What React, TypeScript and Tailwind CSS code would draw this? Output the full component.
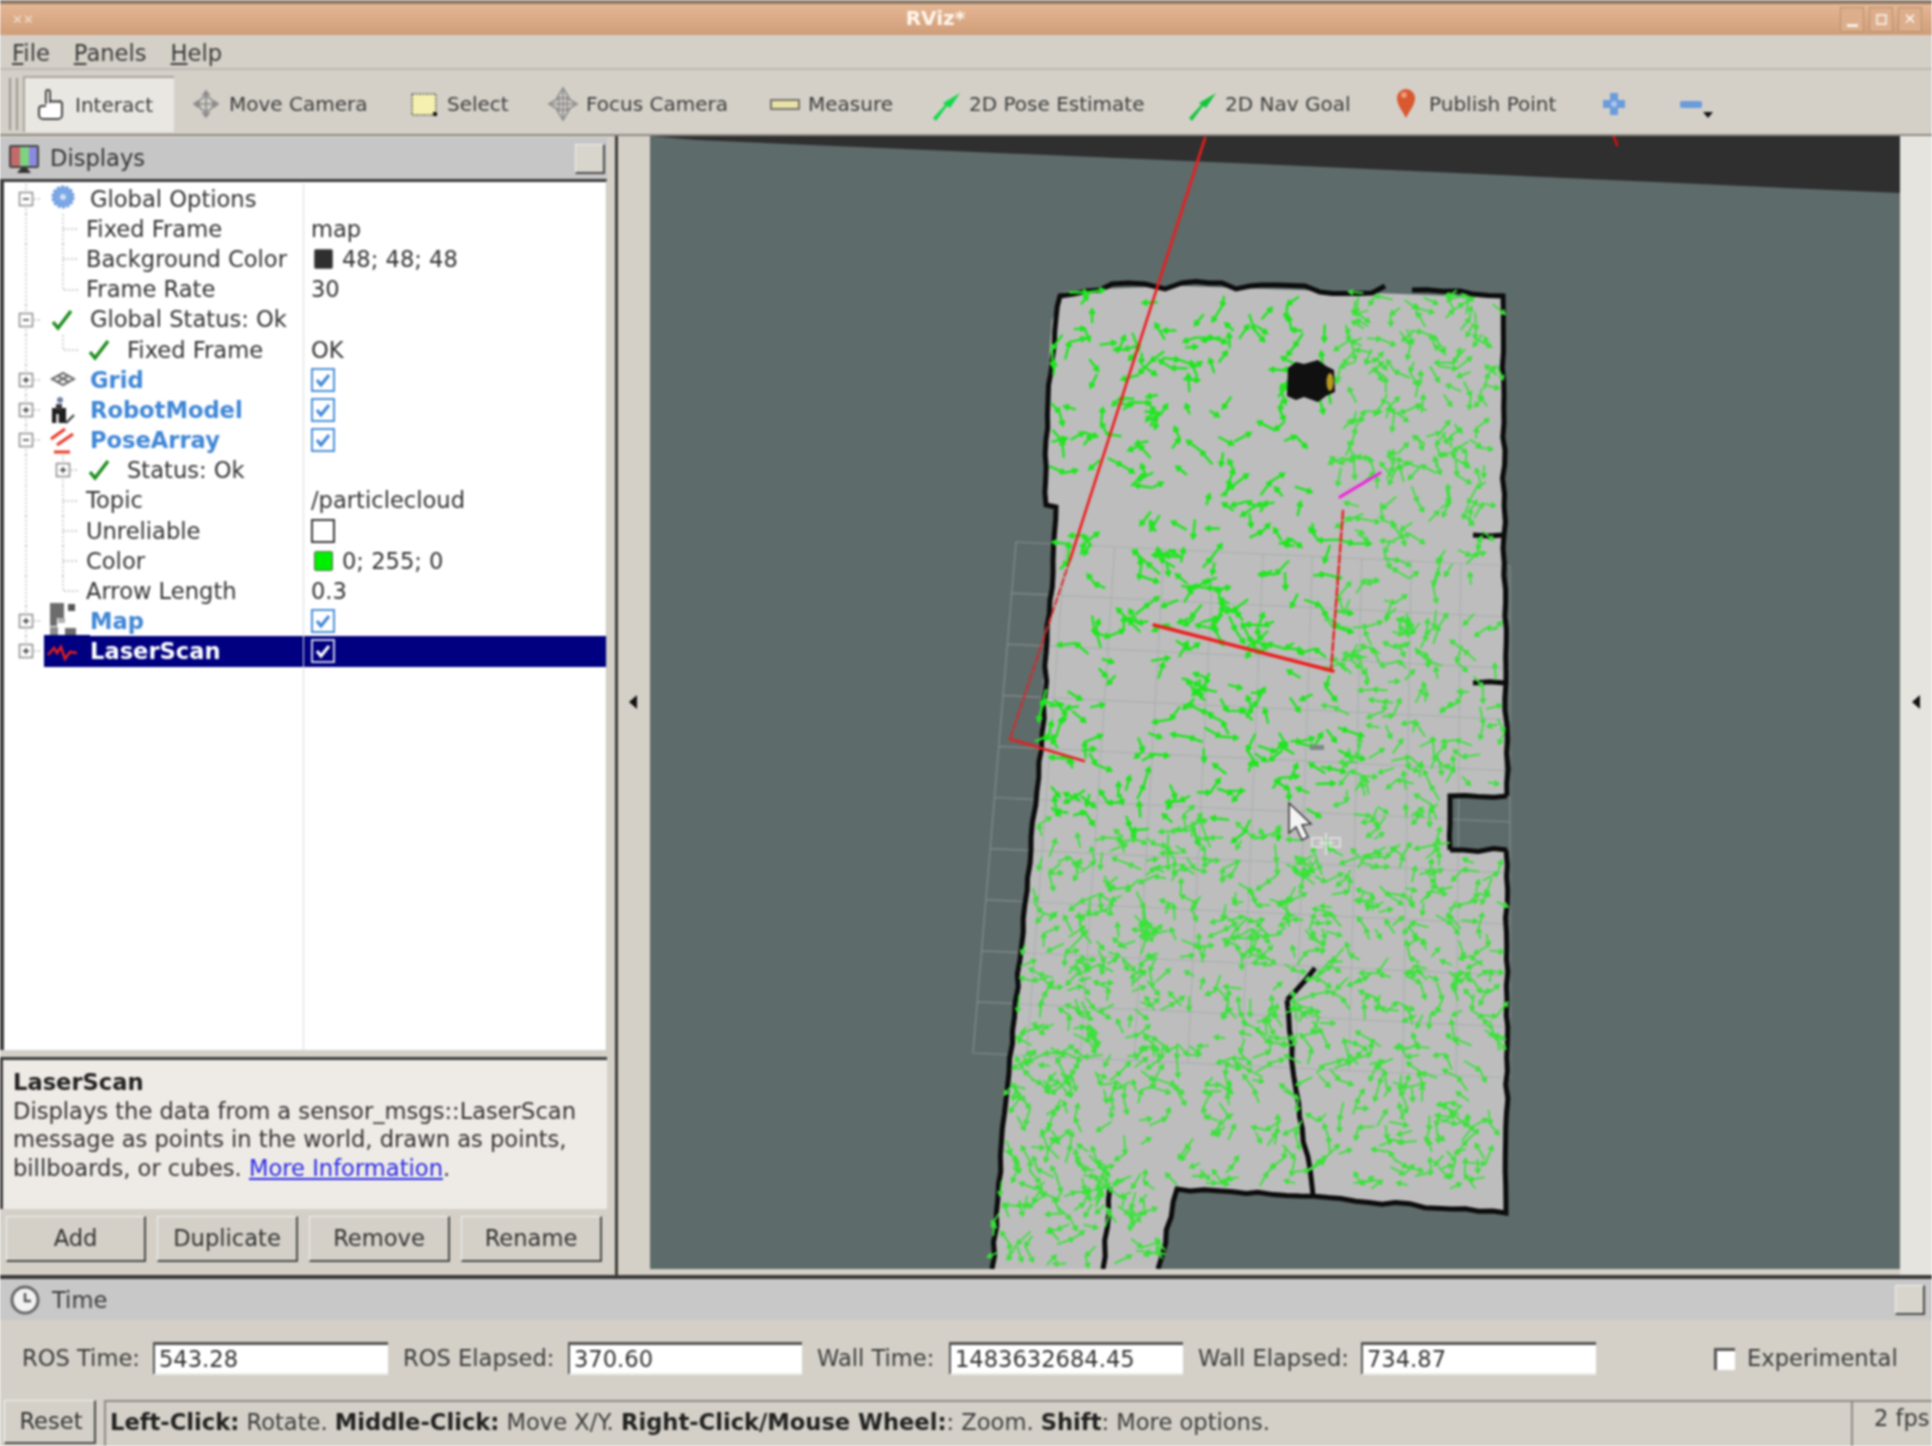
import React from "react";

// seeded random so the particle cloud is the same every load
function makeRandom(seed: number) {
    let s = seed;
    return () => {
        s = (s * 1664525 + 1013904223) % 4294967296;
        return s / 4294967296;
    };
}

function leftEdge(y: number) {
    if (y < 850) return 1056 - ((y - 300) / 550) * 25;
    return 1031 - ((y - 850) / 419) * 42;
}

function inMap(x: number, y: number) {
    if (y < 288 || y > 1269) return false;
    if (x < leftEdge(y) - 3 || x > 1508) return false;
    if (y > 1185 && x > 1160) return false;
    if (x > 1445 && y > 790 && y < 855) return false;
    return true;
}

// particles sit in little pairs in the picture, not evenly scattered
function buildParticles() {
    const rnd = makeRandom(4242);
    let dense = "";
    let sparse = "";
    for (let i = 0; i < 5200; i++) {
        let y = 288 + rnd() * 981;
        let x = leftEdge(y) - 2 + rnd() * (1502 - leftEdge(y));
        const heavy = x > 1340 || y > 830;
        if (rnd() > (heavy ? 0.3 : 0.15)) continue;
        const chain = 1 + Math.floor(rnd() * 2);
        let a = rnd() * Math.PI * 2;
        for (let c = 0; c < chain; c++) {
            const len = 10 + rnd() * 9;
            const ex = x + Math.cos(a) * len;
            const ey = y + Math.sin(a) * len;
            if (!inMap(ex, ey)) break;
            const hx1 = ex + Math.cos(a + 2.6) * 5;
            const hy1 = ey + Math.sin(a + 2.6) * 5;
            const hx2 = ex + Math.cos(a - 2.6) * 5;
            const hy2 = ey + Math.sin(a - 2.6) * 5;
            const seg = `M${x.toFixed(1)} ${y.toFixed(1)}L${ex.toFixed(1)} ${ey.toFixed(1)}M${hx1.toFixed(1)} ${hy1.toFixed(1)}L${ex.toFixed(1)} ${ey.toFixed(1)}L${hx2.toFixed(1)} ${hy2.toFixed(1)}`;
            if (heavy) sparse += seg;
            else dense += seg;
            x = ex;
            y = ey;
            a += (rnd() - 0.5) * 2.6;
        }
    }
    return { dense, sparse };
}

const particles = buildParticles();

function buildGrid() {
    const lines: string[] = [];
    const tl = [1016, 542];
    const tr = [1510, 566];
    const bl = [973, 1053];
    const br = [1510, 1078];
    for (let i = 0; i <= 10; i++) {
        const t = i / 10;
        lines.push(`M${tl[0] + (bl[0] - tl[0]) * t} ${tl[1] + (bl[1] - tl[1]) * t}L${tr[0] + (br[0] - tr[0]) * t} ${tr[1] + (br[1] - tr[1]) * t}`);
        lines.push(`M${tl[0] + (tr[0] - tl[0]) * t} ${tl[1] + (tr[1] - tl[1]) * t}L${bl[0] + (br[0] - bl[0]) * t} ${bl[1] + (br[1] - bl[1]) * t}`);
    }
    return lines.join("");
}

// walls in the occupancy map have stepped edges, so wobble the polylines a bit
const wallRnd = makeRandom(77);
function rough(points: number[][]) {
    let d = "";
    points.forEach((p, i) => {
        if (i === 0) {
            d += `M${p[0]} ${p[1]}`;
            return;
        }
        const prev = points[i - 1];
        const dist = Math.hypot(p[0] - prev[0], p[1] - prev[1]);
        const steps = Math.max(1, Math.round(dist / 14));
        for (let k = 1; k <= steps; k++) {
            const t = k / steps;
            const jx = k === steps ? 0 : (wallRnd() - 0.5) * 3;
            const jy = k === steps ? 0 : (wallRnd() - 0.5) * 3;
            d += `L${(prev[0] + (p[0] - prev[0]) * t + jx).toFixed(1)} ${(prev[1] + (p[1] - prev[1]) * t + jy).toFixed(1)}`;
        }
    });
    return d;
}

const wallPath = [
    [[1056, 318], [1060, 296], [1100, 290], [1112, 284], [1145, 284], [1165, 289], [1182, 283], [1222, 283], [1236, 289], [1262, 285], [1305, 286], [1320, 292], [1372, 293], [1385, 286]],
    [[1412, 290], [1460, 291], [1472, 294], [1503, 296], [1504, 535], [1506, 683], [1507, 796]],
    [[1056, 318], [1052, 360], [1048, 400], [1046, 440], [1046, 505], [1056, 507], [1050, 600], [1042, 733], [1031, 850], [1020, 960], [1006, 1100], [992, 1269]],
    [[1506, 850], [1507, 1000], [1506, 1213], [1300, 1196], [1177, 1189], [1158, 1269]],
    [[1473, 535], [1503, 535]],
    [[1473, 683], [1505, 683]],
    [[1450, 850], [1450, 796], [1507, 796]],
    [[1450, 850], [1507, 850]],
    [[1287, 1000], [1315, 968]],
    [[1287, 1000], [1296, 1090], [1313, 1195]],
    [[1110, 1187], [1103, 1269]],
]
    .map(rough)
    .join("");

function MapView() {
    // coordinates are page pixels, the view box starts where the panel starts
    return (
        <svg viewBox="650 136 1250 1133" className="block w-full h-full">
            <rect x="650" y="136" width="1250" height="1133" fill="#5d6b6a" />
            <polygon points="650,136 1900,136 1900,193 1700,184 1280,165 697,140" fill="#2f2f2f" />
            <polygon
                points="1064,292 1100,289 1180,286 1300,290 1503,298 1506,1212 1177,1189 1158,1269 991,1269 1031,850 1056,507 1046,507 1046,400 1052,320"
                fill="#bdbdbd"
            />
            <rect x="1450" y="795" width="57" height="55" fill="#5d6b6a" />
            <path d={buildGrid()} stroke="#a0a6a6" strokeWidth="1.2" fill="none" opacity="0.6" />
            <path d={wallPath} stroke="#0c0c0c" strokeWidth="5" fill="none" />
            <path d={particles.dense} stroke="#1ee61e" strokeWidth="2.4" fill="none" />
            <path d={particles.sparse} stroke="#39e239" strokeWidth="1.8" fill="none" />
            <polygon points="1288,368 1296,362 1304,364 1318,360 1326,366 1334,370 1335,392 1326,396 1318,402 1304,397 1296,400 1287,396" fill="#101010" />
            <ellipse cx="1330" cy="382" rx="3.5" ry="9" fill="#b89a1e" />
            <rect x="1310" y="745" width="14" height="5" fill="#7d8886" />
            <g fill="none" strokeLinecap="round">
                <line x1="1205" y1="138" x2="1070" y2="560" stroke="#ee1c1c" strokeWidth="2.6" />
                <line x1="1070" y1="560" x2="1010" y2="739" stroke="#d82828" strokeWidth="2" strokeDasharray="7 3" />
                <line x1="1010" y1="739" x2="1084" y2="761" stroke="#e62020" strokeWidth="2.6" />
                <line x1="1154" y1="625" x2="1333" y2="671" stroke="#ee1c1c" strokeWidth="3.4" />
                <line x1="1343" y1="511" x2="1331" y2="671" stroke="#e62020" strokeWidth="2.4" strokeDasharray="8 3" />
                <line x1="1614" y1="137" x2="1617" y2="145" stroke="#d01010" strokeWidth="2.6" />
                <line x1="1340" y1="497" x2="1380" y2="473" stroke="#ee22dd" strokeWidth="3.2" />
            </g>
            <path d="M1289 803v30l7-6 6 13 6-3-6-12 9-1z" fill="#f4f4f4" stroke="#3a3a3a" strokeWidth="1.6" />
            <g fill="none" stroke="#e8e8e8" strokeWidth="1.5">
                <rect x="1312" y="838" width="10" height="9" />
                <rect x="1330" y="838" width="10" height="9" />
                <path d="M1326 833v22M1318 843h16" />
            </g>
        </svg>
    );
}

function Expander({ x, open }: { x: number; open: boolean }) {
    return (
        <g>
            <rect x={x - 6.5} y="8.5" width="13" height="13" fill="#fff" stroke="#8b8b8b" strokeWidth="1.5" />
            <path d={open ? `M${x - 3} 15h6` : `M${x - 3} 15h6M${x} 12v6`} stroke="#333" strokeWidth="1.4" />
        </g>
    );
}

function Check({ cx }: { cx: number }) {
    return <path d={`M${cx - 10} 17l5 6 13-17`} fill="none" stroke="#1c8c1c" strokeWidth="3.4" />;
}

function RowIcon({ name, cx }: { name: string; cx: number }) {
    if (name === "check") return <Check cx={cx} />;
    if (name === "gear")
        return (
            <g>
                <circle cx={cx} cy="13" r="10" fill="#7ca8e4" stroke="#6c9ce0" strokeWidth="3" strokeDasharray="3 1.5" />
                <circle cx={cx} cy="13" r="3" fill="#cfe0f7" />
            </g>
        );
    if (name === "grid")
        return (
            <g fill="none" stroke="#6e6e6e" strokeWidth="2">
                <path d={`M${cx - 11} 14l11-6 11 6-11 6z`} />
                <path d={`M${cx - 5} 11l11 6M${cx + 5} 11l-11 6`} />
            </g>
        );
    if (name === "robot")
        return (
            <g>
                <circle cx={cx - 3} cy="5" r="3" fill="#6f7da8" />
                <rect x={cx - 11} y="13" width="14" height="15" fill="#1e1e1e" />
                <rect x={cx - 7} y="9" width="6" height="6" fill="#3a3a3a" />
                <rect x={cx - 7} y="19" width="3" height="9" fill="#cfcfcf" />
                <path d={`M${cx + 3} 28l8-8`} stroke="#333" strokeWidth="2" />
            </g>
        );
    if (name === "pose")
        return (
            <g fill="none" stroke="#ea3a2a" strokeWidth="3">
                <path d={`M${cx - 12} 14l14-10`} />
                <path d={`M${cx - 6} 20l16-11`} />
                <path d={`M${cx - 9} 27h16`} />
            </g>
        );
    if (name === "map")
        return (
            <g fill="#6c6c6c">
                <rect x={cx - 13} y="-3" width="14" height="15" />
                <rect x={cx + 5} y="-2" width="7" height="7" fill="#555" />
                <rect x={cx - 13} y="12" width="7" height="8" />
                <rect x={cx - 5} y="12" width="7" height="5" fill="#b0b0b0" />
                <rect x={cx - 13} y="21" width="8" height="9" fill="#8c8c8c" />
                <rect x={cx + 2} y="22" width="11" height="8" />
            </g>
        );
    return <path d={`M${cx - 15} 19l6-7 3 5 4-6 4 12 5-7 7 1`} fill="none" stroke="#d71f1f" strokeWidth="2.6" />;
}

type TreeRow = {
    kind: "top" | "leaf" | "status";
    label: string;
    icon?: string;
    open?: boolean;
    bold?: boolean;
    value?: string;
    check?: boolean;
    swatch?: string;
    selected?: boolean;
    last?: boolean;
    inner?: boolean;
    expander?: boolean;
};

const rows: TreeRow[] = [
    { kind: "top", label: "Global Options", icon: "gear", open: true },
    { kind: "leaf", label: "Fixed Frame", value: "map", inner: true },
    { kind: "leaf", label: "Background Color", value: "48; 48; 48", swatch: "#2f2f2f", inner: true },
    { kind: "leaf", label: "Frame Rate", value: "30", last: true },
    { kind: "top", label: "Global Status: Ok", icon: "check", open: true },
    { kind: "status", label: "Fixed Frame", value: "OK", last: true },
    { kind: "top", label: "Grid", icon: "grid", bold: true, check: true },
    { kind: "top", label: "RobotModel", icon: "robot", bold: true, check: true },
    { kind: "top", label: "PoseArray", icon: "pose", bold: true, check: true, open: true },
    { kind: "status", label: "Status: Ok", expander: true, inner: true },
    { kind: "leaf", label: "Topic", value: "/particlecloud", inner: true },
    { kind: "leaf", label: "Unreliable", check: false, inner: true, value: "box" },
    { kind: "leaf", label: "Color", value: "0; 255; 0", swatch: "#00ee00", inner: true },
    { kind: "leaf", label: "Arrow Length", value: "0.3", last: true },
    { kind: "top", label: "Map", icon: "map", bold: true, check: true },
    { kind: "top", label: "LaserScan", icon: "laser", bold: true, check: true, selected: true },
];

function Guide({ row, index }: { row: TreeRow; index: number }) {
    const w = row.kind === "top" ? 86 : row.kind === "leaf" ? 82 : 123;
    return (
        <svg width={w} height="30" viewBox={`0 0 ${w} 30`} className="shrink-0 overflow-visible">
            {row.selected && <rect x="40" y="-1" width={w - 40} height="32" fill="#000080" />}
            <path
                d={index === rows.length - 1 ? "M22 0v15" : "M22 0v30"}
                stroke="#bdbdbd"
                strokeWidth="1.3"
                strokeDasharray="2 2"
                fill="none"
            />
            {row.kind === "top" && <path d="M22 15h14" stroke="#bdbdbd" strokeWidth="1.3" strokeDasharray="2 2" fill="none" />}
            {row.kind !== "top" && (
                <path
                    d={row.last ? "M59 0v15h16" : "M59 0v30M59 15h16"}
                    stroke="#bdbdbd"
                    strokeWidth="1.3"
                    strokeDasharray="2 2"
                    fill="none"
                />
            )}
            {row.kind === "top" && <Expander x={22} open={!!row.open} />}
            {row.expander && <Expander x={59} open={false} />}
            {row.kind === "top" && row.icon && <RowIcon name={row.icon} cx={59} />}
            {row.kind === "status" && <Check cx={96} />}
        </svg>
    );
}

function Checkbox({ checked, selected }: { checked: boolean; selected?: boolean }) {
    const border = selected ? "#c8c8e8" : checked ? "#4a90d9" : "#3a3a3a";
    return (
        <svg width="24" height="24" viewBox="0 0 24 24" className="shrink-0">
            <rect x="1" y="1" width="22" height="22" fill={selected ? "#000080" : "#fff"} stroke={border} strokeWidth="2" />
            {checked && (
                <path d="M6 12l4 5 8-10" fill="none" stroke={selected ? "#fff" : "#3f86d8"} strokeWidth="3" />
            )}
        </svg>
    );
}

function TreeLine({ row, index }: { row: TreeRow; index: number }) {
    const textColor = row.selected ? "text-white" : row.bold ? "text-[#3f86d6]" : "text-[#333333]";
    return (
        <div className="flex h-[30.17px] items-center">
            <div className="flex h-full w-[300px] shrink-0 items-center border-r border-[#dcdcdc]">
                <Guide row={row} index={index} />
                <div className={`flex h-full flex-1 items-center overflow-visible whitespace-nowrap ${row.selected ? "bg-[#000080]" : ""}`}>
                    <span className={`${textColor} ${row.bold ? "font-bold" : ""}`}>{row.label}</span>
                </div>
            </div>
            <div className={`flex h-full flex-1 items-center gap-[9px] pl-[7px] text-[#333333] ${row.selected ? "bg-[#000080]" : ""}`}>
                {row.check !== undefined || row.value === "box" ? (
                    <Checkbox checked={!!row.check} selected={row.selected} />
                ) : (
                    <>
                        {row.swatch && (
                            <span
                                className={`ml-[3px] h-[20px] w-[19px] rounded-[2px] border border-[#666] ${row.swatch === "#00ee00" ? "bg-[#00ee00]" : "bg-[#2f2f2f]"}`}
                            />
                        )}
                        <span>{row.value}</span>
                    </>
                )}
            </div>
        </div>
    );
}

function QtButton({ children, className }: { children: React.ReactNode; className: string }) {
    return (
        <button className={`flex items-center justify-center border-t border-l border-[#f2f0ec] border-r-2 border-b-2 border-r-[#4a4a48] border-b-[#4a4a48] bg-[#d4d0c8] text-[#333333] ${className}`}>
            {children}
        </button>
    );
}

function DockButton() {
    return <div className="h-[30px] w-[30px] border-t border-l border-[#f2f0ec] border-r-2 border-b-2 border-r-[#4a4a48] border-b-[#4a4a48] bg-[#d8d5cd]" />;
}

function Field({ value, className }: { value: string; className: string }) {
    return (
        <div className={`flex h-[33px] items-center border-t-[3px] border-l-2 border-[#555555] border-b-2 border-b-[#eeece8] bg-white pl-[4px] text-[#333333] ${className}`}>
            {value}
        </div>
    );
}

function ToolItem({ label, width, icon }: { label?: string; width: string; icon: React.ReactNode }) {
    return (
        <div className={`flex shrink-0 items-center gap-[7px] ${width}`}>
            <svg width="32" height="40" viewBox="0 0 32 40" className="shrink-0">
                {icon}
            </svg>
            {label && <span className="whitespace-nowrap text-[#3c3c3c]">{label}</span>}
        </div>
    );
}

export default function App() {
    return (
        <div className="flex h-[1446px] w-[1932px] flex-col overflow-hidden bg-[#d4d0c8] font-['DejaVu_Sans',sans-serif] text-[22.6px] leading-none blur-[1px]">
            {/* title bar */}
            <div className="flex h-[35px] shrink-0 items-center justify-between border-t-[4px] border-[#8c7a68] bg-gradient-to-b from-[#e6b795] to-[#cf9d78] pl-[12px] pr-[10px]">
                <span className="text-[13px] text-[#efe0d0]">✕✕</span>
                <span className="mr-[3px] mb-[3px] font-bold text-[20px] text-[#fff6ec]">RViz*</span>
                <div className="flex gap-[5px]">
                    <div className="flex h-[25px] w-[24px] items-end justify-center border border-[#b8906e] bg-[#dcae8c] pb-[4px]">
                        <div className="h-[3px] w-[11px] bg-[#f8efe6]" />
                    </div>
                    <div className="flex h-[25px] w-[24px] items-center justify-center border border-[#b8906e] bg-[#dcae8c]">
                        <div className="h-[11px] w-[11px] border-2 border-[#f3e6da]" />
                    </div>
                    <div className="flex h-[25px] w-[24px] items-center justify-center border border-[#b8906e] bg-[#dcae8c] text-[15px] font-bold text-[#fffaf5]">✕</div>
                </div>
            </div>

            {/* menu */}
            <div className="flex h-[35px] shrink-0 items-center gap-[24px] border-b-2 border-[#bdb9b1] pl-[12px] pt-[4px] text-[#3a3a3a]">
                <span><span className="underline">F</span>ile</span>
                <span><span className="underline">P</span>anels</span>
                <span><span className="underline">H</span>elp</span>
            </div>

            {/* toolbar */}
            <div className="flex h-[66px] shrink-0 items-center border-b-2 border-[#8e8b84] pt-[3px] text-[20px]">
                <div className="ml-[9px] mr-[5px] h-[52px] w-[9px] shrink-0 border-x-2 border-[#9b9890]" />
                <div className="flex w-[167px] shrink-0">
                    <div className="flex h-[56px] w-[151px] items-center gap-[9px] border-t-2 border-l-2 border-[#aaa69e] bg-[#e9e7e2] pl-[11px]">
                        <svg width="30" height="36" viewBox="0 0 30 36" className="shrink-0">
                            <path d="M10 17V5a2 2 0 0 1 4 0v10l2-1 2 1 2-1 2 1 2-1 2 2v12a4 4 0 0 1-4 4H7a4 4 0 0 1-4-4v-6a3 3 0 0 1 3-3h4" fill="#fff" stroke="#444" strokeWidth="2" />
                        </svg>
                        <span className="text-[#3c3c3c]">Interact</span>
                    </div>
                </div>
                <ToolItem
                    label="Move Camera"
                    width="w-[218px]"
                    icon={
                        <g fill="none" stroke="#8a8a8a" strokeWidth="1.6">
                            <circle cx="16" cy="20" r="7" />
                            <path d="M16 7v26M4 20h24M16 7l-3 4h6zM16 33l-3-4h6zM4 20l4-3v6zM28 20l-4-3v6z" />
                        </g>
                    }
                />
                <ToolItem
                    label="Select"
                    width="w-[139px]"
                    icon={
                        <g>
                            <rect x="4" y="10" width="24" height="21" fill="#f5efb0" stroke="#555" strokeWidth="1.4" strokeDasharray="2 1.5" />
                            <rect x="25" y="28" width="4" height="4" fill="#111" />
                        </g>
                    }
                />
                <ToolItem
                    label="Focus Camera"
                    width="w-[222px]"
                    icon={
                        <g fill="none" stroke="#8d8d8d" strokeWidth="1.6">
                            <path d="M16 4l6 10h-12zM16 36l6-10h-12zM2 20l10-6v12zM30 20l-10-6v12z" />
                            <path d="M16 4v32M2 20h28" />
                        </g>
                    }
                />
                <ToolItem
                    label="Measure"
                    width="w-[161px]"
                    icon={<rect x="2" y="16" width="28" height="9" fill="#e9e1a8" stroke="#77756b" strokeWidth="2" />}
                />
                <ToolItem
                    label="2D Pose Estimate"
                    width="w-[256px]"
                    icon={<path d="M3 34L15 21l-2-2L30 9 20 24l-3-2L6 37z" fill="#12d94a" />}
                />
                <ToolItem
                    label="2D Nav Goal"
                    width="w-[204px]"
                    icon={<path d="M3 34L15 21l-2-2L30 9 20 24l-3-2L6 37z" fill="#12c63c" />}
                />
                <ToolItem
                    label="Publish Point"
                    width="w-[208px]"
                    icon={
                        <g>
                            <path d="M16 34c-4-8-9-13-9-20a9 9 0 0 1 18 0c0 7-5 12-9 20z" fill="#d9582f" />
                            <circle cx="14" cy="11" r="3" fill="#ee9a7a" />
                        </g>
                    }
                />
                <ToolItem
                    width="w-[77px]"
                    icon={
                        <g>
                            <path d="M12 9h8v7h7v8h-7v7h-8v-7H5v-8h7z" fill="#6a9cdc" />
                            <circle cx="16" cy="20" r="3" fill="#a9c6ec" />
                        </g>
                    }
                />
                <div className="relative w-[60px] shrink-0">
                    <svg width="32" height="40" viewBox="0 0 32 40">
                        <rect x="5" y="17" width="22" height="7" rx="2" fill="#6a9cdc" />
                    </svg>
                    <div className="absolute left-[28px] top-[28px] h-0 w-0 border-x-[5px] border-t-[6px] border-x-transparent border-t-[#111]" />
                </div>
            </div>

            {/* main area */}
            <div className="flex h-[1139px] shrink-0">
                <div className="flex w-[618px] shrink-0 flex-col border-r-[3px] border-[#3d3d3a] pr-[8px]">
                    <div className="mt-[2px] flex h-[41px] shrink-0 items-center justify-between bg-[#c6c6c6] pl-[6px] pr-[2px]">
                        <div className="flex items-center gap-[8px]">
                            <svg width="36" height="36" viewBox="0 0 36 36">
                                <rect x="3" y="4" width="30" height="23" rx="2" fill="#444" />
                                <rect x="5" y="6" width="9" height="19" fill="#c46a6a" />
                                <rect x="14" y="6" width="9" height="19" fill="#7fd27f" />
                                <rect x="23" y="6" width="8" height="19" fill="#8a8ae0" />
                                <path d="M11 32h14l-4-5h-6z" fill="#333" />
                            </svg>
                            <span className="text-[#333333]">Displays</span>
                        </div>
                        <DockButton />
                    </div>
                    <div className="flex flex-1 flex-col border-t-[3px] border-l-[4px] border-[#3c3c3c] border-r border-r-[#c4c2bc] bg-white pt-[2px] text-[#333333] min-h-0">
                        {rows.map((row, index) => (
                            <TreeLine key={row.label + index} row={row} index={index} />
                        ))}
                        <div className="flex-1">
                            <div className="h-full w-[300px] border-r border-[#dcdcdc]" />
                        </div>
                    </div>
                    <div className="mt-[7px] h-[152px] shrink-0 border-t-[3px] border-l-[3px] border-[#3c3c3c] bg-[#eeebe6] pl-[10px] pt-[8px] text-[22.6px] leading-[28.5px] text-[#333333]">
                        <div className="font-bold leading-[28.5px] text-[#222222]">LaserScan</div>
                        <div className="whitespace-nowrap">Displays the data from a sensor_msgs::LaserScan</div>
                        <div className="whitespace-nowrap">message as points in the world, drawn as points,</div>
                        <div className="whitespace-nowrap">
                            billboards, or cubes. <span className="text-[#2a2ae6] underline">More Information</span>.
                        </div>
                    </div>
                    <div className="flex h-[66px] shrink-0 items-center gap-[11px] pl-[6px] pb-[7px]">
                        <QtButton className="h-[46px] w-[140px]">Add</QtButton>
                        <QtButton className="h-[46px] w-[141px]">Duplicate</QtButton>
                        <QtButton className="h-[46px] w-[141px]">Remove</QtButton>
                        <QtButton className="h-[46px] w-[141px]">Rename</QtButton>
                    </div>
                </div>
                <div className="flex w-[29px] shrink-0 items-center justify-center pb-[8px]">
                    <div className="h-0 w-0 border-y-[7px] border-r-[8px] border-y-transparent border-r-[#111]" />
                </div>
                <div className="h-[1133px] w-[1253px] shrink-0 border-l-[3px] border-[#d4d0c8]">
                    <MapView />
                </div>
                <div className="flex flex-1 items-center justify-center bg-[#e6e4df] pb-[8px]">
                    <div className="h-0 w-0 border-y-[7px] border-r-[8px] border-y-transparent border-r-[#111]" />
                </div>
            </div>

            {/* time panel */}
            <div className="h-[4px] shrink-0 bg-[#3a3a38]" />
            <div className="flex h-[41px] shrink-0 items-center justify-between bg-[#c8c8c8] pl-[9px] pr-[7px]">
                <div className="flex items-center gap-[11px]">
                    <svg width="32" height="32" viewBox="0 0 32 32">
                        <circle cx="16" cy="16" r="13" fill="#f2f2f2" stroke="#666" strokeWidth="3" />
                        <path d="M16 9v8h6" fill="none" stroke="#555" strokeWidth="2.4" />
                    </svg>
                    <span className="pt-[2px] text-[#3c3c3c]">Time</span>
                </div>
                <DockButton />
            </div>
            <div className="flex h-[80px] shrink-0 items-center pl-[22px] pb-[3px] text-[#3c3c3c]">
                <span className="w-[131px] shrink-0 whitespace-nowrap">ROS Time:</span>
                <Field value="543.28" className="w-[235px] shrink-0" />
                <span className="ml-[15px] w-[165px] shrink-0 whitespace-nowrap">ROS Elapsed:</span>
                <Field value="370.60" className="w-[234px] shrink-0" />
                <span className="ml-[15px] w-[132px] shrink-0 whitespace-nowrap">Wall Time:</span>
                <Field value="1483632684.45" className="w-[234px] shrink-0" />
                <span className="ml-[15px] w-[163px] shrink-0 whitespace-nowrap">Wall Elapsed:</span>
                <Field value="734.87" className="w-[235px] shrink-0" />
                <div className="ml-[118px] h-[22px] w-[21px] shrink-0 border-t-[3px] border-l-[3px] border-[#555] bg-white" />
                <span className="ml-[12px] whitespace-nowrap">Experimental</span>
            </div>
            <div className="flex flex-1 items-stretch pl-[4px] text-[#3c3c3c]">
                <QtButton className="mb-[2px] w-[92px] shrink-0 pl-[3px]">Reset</QtButton>
                <div className="ml-[8px] flex flex-1 items-center border-t-2 border-l-2 border-[#8f8c85] pb-[3px] pl-[4px] whitespace-nowrap">
                    <span>
                        <b className="text-[#222222]">Left-Click:</b> Rotate. <b className="text-[#222222]">Middle-Click:</b> Move X/Y.{" "}
                        <b className="text-[#222222]">Right-Click/Mouse Wheel:</b>: Zoom. <b className="text-[#222222]">Shift</b>: More options.
                    </span>
                </div>
                <div className="w-[81px] shrink-0 border-t-2 border-l-2 border-[#8f8c85] pl-[21px] pt-[5px]">2 fps</div>
            </div>
        </div>
    );
}
